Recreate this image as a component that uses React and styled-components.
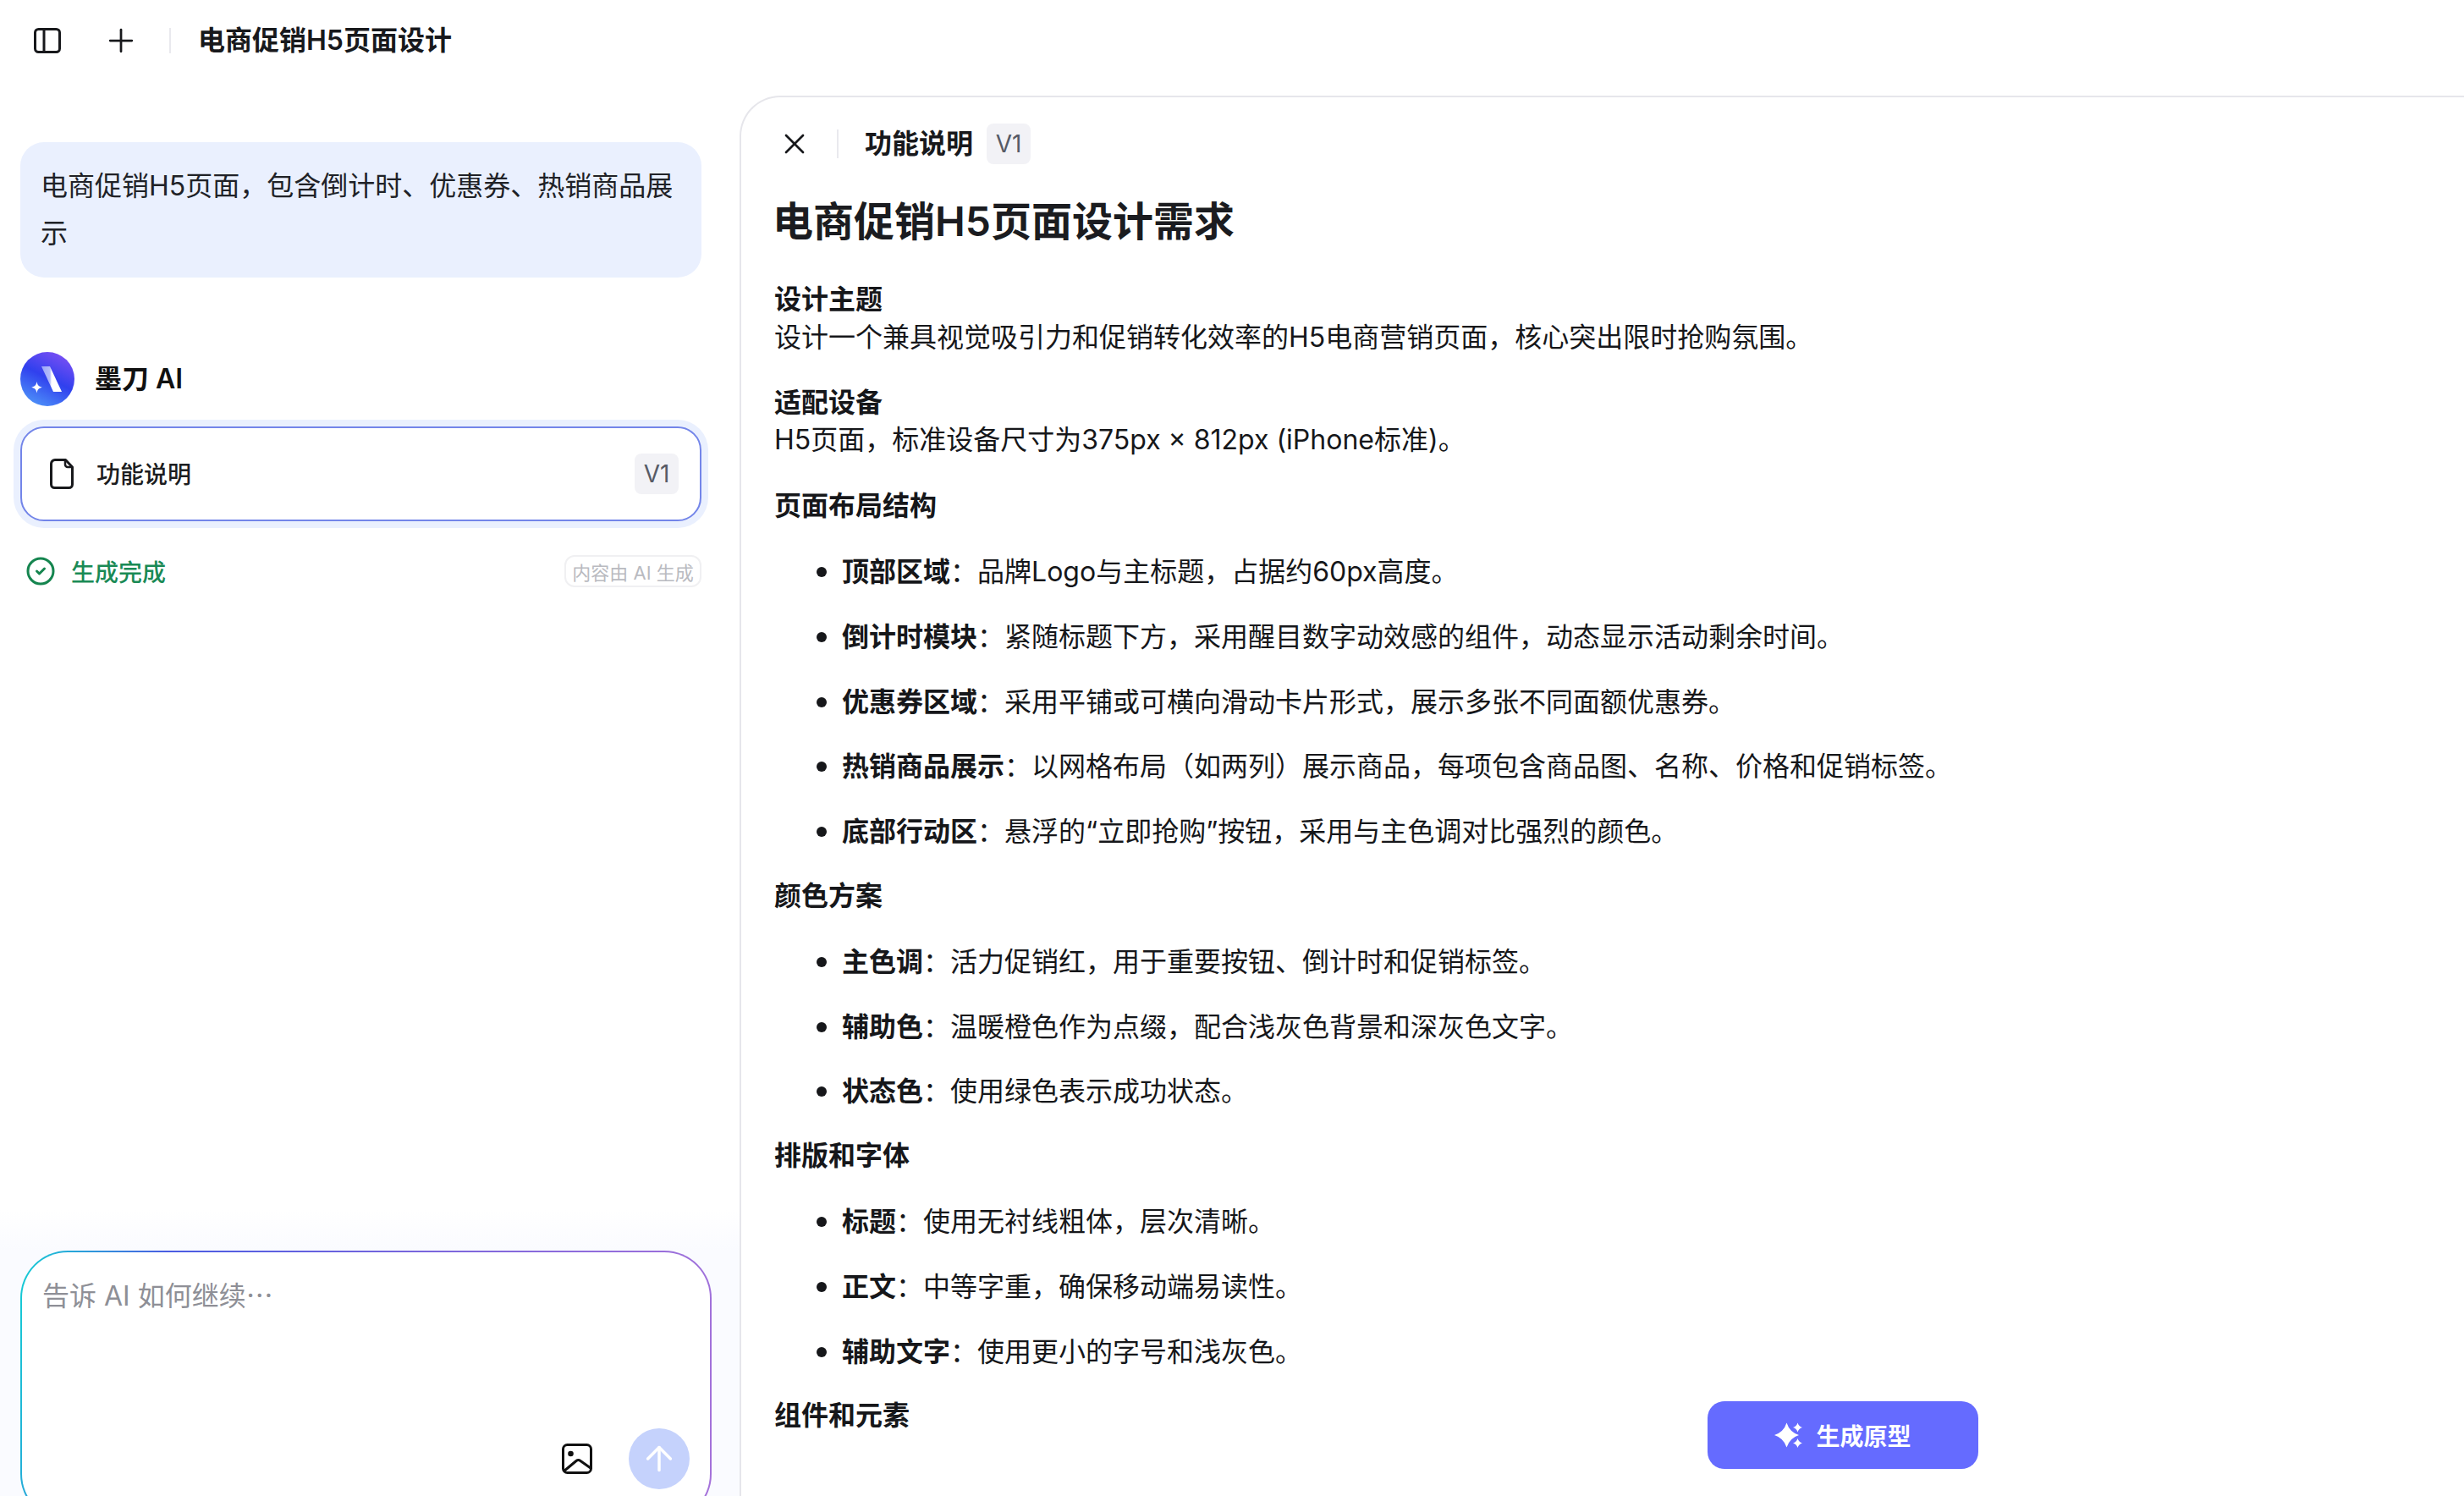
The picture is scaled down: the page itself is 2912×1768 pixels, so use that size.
import React from "react";
import styled, { createGlobalStyle } from "styled-components";
import { X, CircleCheck, ArrowUp, Plus } from "lucide-react";

const Global = createGlobalStyle`
  html, body { margin: 0; padding: 0; height: 100%; background: #fff; overflow: hidden; }
  * { box-sizing: border-box; }
  body { font-family: Inter, "Noto Sans CJK SC", "Liberation Sans", sans-serif; color: #18191c; }
`;

const Page = styled.div`
  display: flex;
  height: 1768px;
  width: 2912px;
  overflow: hidden;
  background: #fff;
`;
const Sidebar = styled.aside`
  width: 874px;
  flex: none;
  height: 1768px;
  display: flex;
  flex-direction: column;
`;
const Header = styled.header`
  height: 96px;
  flex: none;
  display: flex;
  align-items: center;
  padding-left: 40px;
`;
const PlusWrap = styled.span`
  display: flex;
  margin-left: 49px;
  color: #18191c;
`;
const VLine = styled.span`
  width: 2px;
  height: ${(p) => p.$h}px;
  background: #e9e9ee;
  margin: 0 ${(p) => p.$r}px 0 ${(p) => p.$l}px;
  flex: none;
`;
const HeaderTitle = styled.h2`
  margin: 0;
  font-size: 32px;
  line-height: 44px;
  font-weight: 600;
  color: #18191c;
`;
const Thread = styled.div`
  padding: 72px 45px 0 24px;
`;
const Bubble = styled.div`
  background: #eaf0fe;
  border-radius: 28px;
  padding: 24px 24px;
  height: 160px;
  font-size: 32px;
  line-height: 56px;
  color: #202227;
`;
const AiRow = styled.div`
  display: flex;
  align-items: center;
  gap: 24px;
  margin-top: 88px;
  font-size: 32px;
  font-weight: 600;
  line-height: 66px;
  height: 64px;
  color: #111;
`;
const DocCard = styled.div`
  margin-top: 24px;
  height: 112px;
  border: 2.5px solid #7385e9;
  border-radius: 28px;
  box-shadow: 0 0 0 8px #eaf0fe;
  background: #fff;
  display: flex;
  align-items: center;
  padding: 0 25px 0 33px;
`;
const DocName = styled.span`
  font-size: 28px;
  font-weight: 500;
  margin-left: 27px;
  flex: 1;
  color: #1c1d21;
  position: relative;
  top: -1px;
`;
const VersionBadge = styled.span`
  width: 52px;
  height: 48px;
  border-radius: 8px;
  background: #f2f2f6;
  color: #575b66;
  font-size: 28px;
  display: flex;
  align-items: center;
  justify-content: center;
  flex: none;
  margin-left: ${(p) => p.$ml || 0}px;
`;
const StatusRow = styled.div`
  margin-top: 40px;
  height: 38px;
  display: flex;
  align-items: center;
  padding-left: 6px;
  color: #15854f;
`;
const StatusText = styled.span`
  font-size: 28px;
  margin-left: 18px;
  flex: 1;
  font-weight: 500;
  color: #1a8a55;
`;
const AiTag = styled.span`
  height: 38px;
  width: 162px;
  border: 2px solid #f0f0f2;
  border-radius: 12px;
  color: #b9bac0;
  font-size: 22px;
  display: flex;
  align-items: center;
  justify-content: center;
  white-space: nowrap;
`;
const Dock = styled.div`
  margin-top: auto;
  margin-bottom: -30px;
  padding: 48px 33px 0 24px;
  background: linear-gradient(180deg, #ffffff 0, #fafbff 48px);
`;
const Composer = styled.div`
  height: 320px;
  border: 2.5px solid transparent;
  border-radius: 56px;
  background: linear-gradient(#fff, #fff) padding-box,
    linear-gradient(100deg, #14cfd4 0%, #4a5ce2 20%, #7a66dc 55%, #a672da 100%) border-box;
  display: flex;
  flex-direction: column;
  padding: 27px 24px 36px 24px;
`;
const Placeholder = styled.div`
  font-size: 32px;
  line-height: 44px;
  color: #8e8f96;
  flex: 1;
`;
const CjkEllipsis = styled.span`
  font-family: "Noto Sans CJK SC", sans-serif;
`;
const ComposerActions = styled.div`
  display: flex;
  align-items: center;
  justify-content: flex-end;
  gap: 43px;
`;
const SendButton = styled.span`
  width: 72px;
  height: 72px;
  border-radius: 50%;
  background: #c5d2fc;
  color: #fff;
  display: flex;
  align-items: center;
  justify-content: center;
`;
const Panel = styled.main`
  flex: 1;
  position: relative;
  margin-top: 113px;
  border: 2px solid #e6e6eb;
  border-right: 0;
  border-bottom: 0;
  border-top-left-radius: 48px;
  padding: 32px 0 0 39px;
  height: 1700px;
  overflow: hidden;
`;
const PanelBar = styled.div`
  display: flex;
  align-items: center;
  height: 46px;
  color: #18191c;
`;
const CloseWrap = styled.span`
  display: flex;
  margin-left: 4px;
  margin-right: -2px;
`;
const PanelName = styled.span`
  font-size: 32px;
  font-weight: 600;
  line-height: 46px;
  color: #18191c;
`;
const Doc = styled.article`
  padding-top: 37px;
  font-size: 32px;
  line-height: 44.8px;
  color: #16171a;
`;
const H1 = styled.h1`
  margin: 0 0 0 -2px;
  font-size: 48px;
  line-height: 64px;
  font-weight: 600;
  color: #1b1c20;
`;
const SectionTitle = styled.h3`
  margin: ${(p) => p.$mt || 32}px 0 0;
  font-size: 32px;
  line-height: 44.8px;
  font-weight: 600;
`;
const List = styled.ul`
  margin: 31px 0 0;
  padding: 0 0 0 80px;
`;
const Item = styled.li`
  height: 44.8px;
  margin-top: 32px;
  &:first-child { margin-top: 0; }
  &::marker { font-size: 36px; }
`;
const Bold = styled.strong`
  font-weight: 600;
`;
const PrimaryButton = styled.button`
  position: absolute;
  left: 1142px;
  top: 1541px;
  width: 320px;
  height: 80px;
  border: 0;
  border-radius: 20px;
  background: #656bff;
  color: #fff;
  font: inherit;
  font-size: 28px;
  font-weight: 600;
  display: flex;
  align-items: center;
  justify-content: center;
  gap: 16px;
`;

const Ic = styled.svg`
  display: block;
  flex: none;
`;

const PanelToggle = () => (
  <Ic width="32" height="30" viewBox="0 0 32 30" fill="none" stroke="#18191c" strokeWidth="3">
    <rect x="1.5" y="1.5" width="29" height="27" rx="4" />
    <path d="M12 1.5v27" />
  </Ic>
);
const Logo = () => (
  <Ic width="64" height="64" viewBox="0 0 64 64">
    <defs>
      <linearGradient id="lg" x1="0.8" y1="0" x2="0.3" y2="1">
        <stop offset="0" stopColor="#7f50f4" />
        <stop offset="0.5" stopColor="#3040ee" />
        <stop offset="1" stopColor="#4d90f8" />
      </linearGradient>
      <linearGradient id="lg2" x1="0" y1="0" x2="1" y2="0">
        <stop offset="0" stopColor="#9aa6f8" />
        <stop offset="0.42" stopColor="#b4bcfa" />
        <stop offset="0.5" stopColor="#fff" />
        <stop offset="1" stopColor="#fff" />
      </linearGradient>
    </defs>
    <circle cx="32" cy="32" r="32" fill="url(#lg)" />
    <path d="M25 17h10l14 30H39z" fill="url(#lg2)" />
    <path d="M19.500 35c.9 4.300 2 5.500 6.300 6.700-4.300 1.200-5.400 2.400-6.300 6.700-.9-4.300-2-5.500-6.300-6.700 4.300-1.200 5.400-2.400 6.300-6.700z" fill="#fff" />
  </Ic>
);
const FileIcon = () => (
  <Ic width="28" height="36" viewBox="0 0 28 36" fill="none" stroke="#18191c" strokeWidth="3" strokeLinejoin="round">
    <path d="M6 1.500h12.500l8 8.500v20.500a4 4 0 0 1-4 4H5.500a4 4 0 0 1-4-4V6a4.500 4.500 0 0 1 4.500-4.500z" />
    <path d="M18 2v5a3 3 0 0 0 3 3h5.500" strokeWidth="2.500" />
  </Ic>
);
const PictureIcon = () => (
  <Ic width="36" height="36" viewBox="0 0 36 36" fill="none" stroke="#111" strokeWidth="3" strokeLinejoin="round">
    <rect x="1.500" y="1.500" width="33" height="33" rx="5" />
    <circle cx="10.500" cy="12" r="3.300" fill="#111" stroke="none" />
    <path d="M2 33l15-12.500a4 4 0 0 1 5 0L34 29" />
  </Ic>
);
const Sparkles = () => (
  <Ic width="33" height="30" viewBox="0 0 33 30" fill="#fff">
    <path d="M14.500 .5Q18 11.500 29 15 18 18.500 14.500 29.500 11 18.500 0 15 11 11.500 14.500 .5z" />
    <path d="M27.500 .5Q28.800 4.700 33 6 28.800 7.300 27.500 11.500 26.200 7.300 22 6 26.200 4.700 27.500 .5z" />
    <path d="M27.500 19Q28.800 23.200 33 24.500 28.800 25.800 27.500 30 26.200 25.800 22 24.500 26.200 23.200 27.500 19z" />
  </Ic>
);

const sections = [
  {
    title: "页面布局结构",
    items: [
      ["顶部区域", "品牌Logo与主标题，占据约60px高度。"],
      ["倒计时模块", "紧随标题下方，采用醒目数字动效感的组件，动态显示活动剩余时间。"],
      ["优惠券区域", "采用平铺或可横向滑动卡片形式，展示多张不同面额优惠券。"],
      ["热销商品展示", "以网格布局（如两列）展示商品，每项包含商品图、名称、价格和促销标签。"],
      ["底部行动区", "悬浮的“立即抢购”按钮，采用与主色调对比强烈的颜色。"],
    ],
  },
  {
    title: "颜色方案",
    items: [
      ["主色调", "活力促销红，用于重要按钮、倒计时和促销标签。"],
      ["辅助色", "温暖橙色作为点缀，配合浅灰色背景和深灰色文字。"],
      ["状态色", "使用绿色表示成功状态。"],
    ],
  },
  {
    title: "排版和字体",
    items: [
      ["标题", "使用无衬线粗体，层次清晰。"],
      ["正文", "中等字重，确保移动端易读性。"],
      ["辅助文字", "使用更小的字号和浅灰色。"],
    ],
  },
];

export default function App() {
  return (
    <Page>
      <Global />
      <Sidebar>
        <Header>
          <PanelToggle />
          <PlusWrap>
            <Plus size={44} strokeWidth={1.5} />
          </PlusWrap>
          <VLine $h={30} $l={35} $r={32} />
          <HeaderTitle>电商促销H5页面设计</HeaderTitle>
        </Header>
        <Thread>
          <Bubble>电商促销H5页面，包含倒计时、优惠券、热销商品展示</Bubble>
          <AiRow>
            <Logo />
            <span>墨刀 AI</span>
          </AiRow>
          <DocCard>
            <FileIcon />
            <DocName>功能说明</DocName>
            <VersionBadge>V1</VersionBadge>
          </DocCard>
          <StatusRow>
            <CircleCheck size={36} strokeWidth={2} />
            <StatusText>生成完成</StatusText>
            <AiTag>内容由 AI 生成</AiTag>
          </StatusRow>
        </Thread>
        <Dock>
          <Composer>
            <Placeholder>告诉 AI 如何继续<CjkEllipsis>…</CjkEllipsis></Placeholder>
            <ComposerActions>
              <PictureIcon />
              <SendButton>
                <ArrowUp size={46} strokeWidth={1.8} />
              </SendButton>
            </ComposerActions>
          </Composer>
        </Dock>
      </Sidebar>
      <Panel>
        <PanelBar>
          <CloseWrap>
            <X size={40} strokeWidth={1.6} />
          </CloseWrap>
          <VLine $h={34} $l={32} $r={31} />
          <PanelName>功能说明</PanelName>
          <VersionBadge $ml={16}>V1</VersionBadge>
        </PanelBar>
        <Doc>
          <H1>电商促销H5页面设计需求</H1>
          <SectionTitle $mt={38}>设计主题</SectionTitle>
          <div>设计一个兼具视觉吸引力和促销转化效率的H5电商营销页面，核心突出限时抢购氛围。</div>
          <SectionTitle>适配设备</SectionTitle>
          <div>H5页面，标准设备尺寸为375px × 812px (iPhone标准)。</div>
          {sections.map((s) => (
            <React.Fragment key={s.title}>
              <SectionTitle $mt={33}>{s.title}</SectionTitle>
              <List>
                {s.items.map(([k, v]) => (
                  <Item key={k}>
                    <Bold>{k}</Bold>：{v}
                  </Item>
                ))}
              </List>
            </React.Fragment>
          ))}
          <SectionTitle $mt={33}>组件和元素</SectionTitle>
        </Doc>
        <PrimaryButton>
          <Sparkles />
          生成原型
        </PrimaryButton>
      </Panel>
    </Page>
  );
}
